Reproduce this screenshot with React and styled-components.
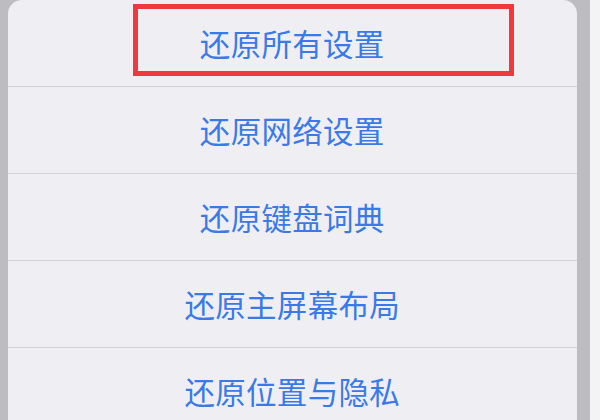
import styled, { createGlobalStyle } from "styled-components";

const GlobalStyle = createGlobalStyle`
  html, body {
    margin: 0;
    padding: 0;
    background: #bdbcc1;
  }
  body {
    font-family: "Noto Sans CJK SC", "Noto Sans", sans-serif;
  }
`;

const items = [
  { label: "还原所有设置", marked: true },
  { label: "还原网络设置" },
  { label: "还原键盘词典" },
  { label: "还原主屏幕布局" },
  { label: "还原位置与隐私" },
];

const App = () => {
  return (
    <>
      <GlobalStyle />
      <Page>
        <Gutter />
        <Sheet>
          {items.map((item) => (
            <Row key={item.label}>
              <Label>{item.label}</Label>
              {item.marked && <Highlight />}
            </Row>
          ))}
        </Sheet>
        <Gutter />
        <Edge />
      </Page>
    </>
  );
};
export default App;

const Page = styled.div`
  width: 600px;
  height: 420px;
  overflow: hidden;
  display: grid;
  grid-template-columns: 7.5px 569.5px 13px 1fr;
  background: #bdbcc1;
`;

const Gutter = styled.div`
  background: #bdbcc1;
`;

const Edge = styled.div`
  background: #f3f3f5;
`;

const Sheet = styled.div`
  background: #efeff3;
  border-radius: 14px 14px 0 0;
  display: flex;
  flex-direction: column;
`;

const Row = styled.div`
  position: relative;
  flex: 0 0 86px;
  display: flex;
  align-items: center;
  justify-content: center;
  border-bottom: 1px solid #d3d3d7;
`;

const Label = styled.span`
  font-size: 30.5px;
  line-height: 1;
  color: #3a7ae8;
  letter-spacing: 0.3px;
`;

const Highlight = styled.div`
  position: absolute;
  left: 125.5px;
  top: 4px;
  width: 381px;
  height: 72px;
  box-sizing: border-box;
  border: 5px solid #ee3a3f;
`;
